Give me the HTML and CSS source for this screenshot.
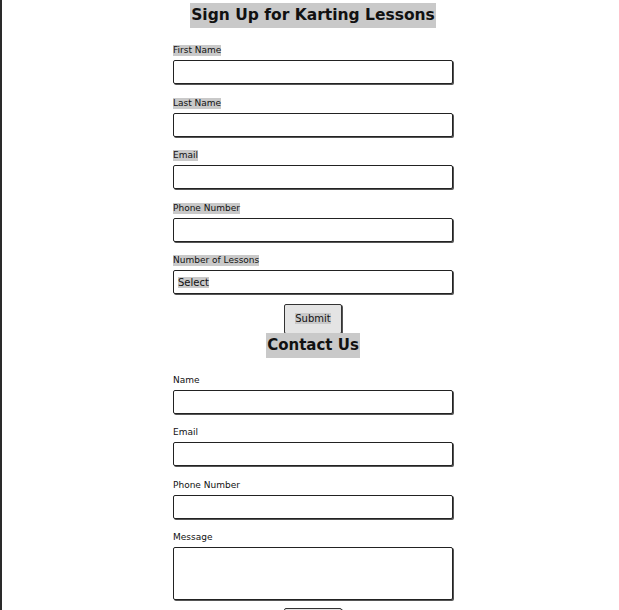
FILE: index.html
```html
<!DOCTYPE html>
<html>
<head>
<meta charset="utf-8">
<link rel="stylesheet" href="styles.css">
</head>
<body>
<div class="page">
  <section class="block">
    <h1 class="title">Sign Up for Karting Lessons</h1>
    <form class="form">
      <div class="field"><label class="lbl shaded">First Name</label><input class="box" type="text"></div>
      <div class="field"><label class="lbl shaded">Last Name</label><input class="box" type="text"></div>
      <div class="field"><label class="lbl shaded">Email</label><input class="box" type="text"></div>
      <div class="field"><label class="lbl shaded">Phone Number</label><input class="box" type="text"></div>
      <div class="field"><label class="lbl shaded">Number of Lessons</label><div class="box select"><span class="shaded">Select</span></div></div>
      <button type="button" class="btn"><span class="shaded">Submit</span></button>
    </form>
  </section>
  <section class="block">
    <h1 class="title title2">Contact Us</h1>
    <form class="form form2">
      <div class="field"><label class="lbl">Name</label><input class="box" type="text"></div>
      <div class="field"><label class="lbl">Email</label><input class="box" type="text"></div>
      <div class="field"><label class="lbl">Phone Number</label><input class="box" type="text"></div>
      <div class="field"><label class="lbl">Message</label><textarea class="box area"></textarea></div>
      <button type="button" class="btn btn-send" aria-label="Send"></button>
    </form>
  </section>
</div>
</body>
</html>
```
FILE: styles.css
```css
html, body {
  margin: 0;
  padding: 0;
  background: #fff;
  overflow: hidden;
}
body {
  border-left: 2px solid #2a2a2a;
  height: 610px;
  box-sizing: border-box;
  font-family: "DejaVu Sans", sans-serif;
  color: #111;
}
.page {
  padding-left: 5px;
  display: flex;
  flex-direction: column;
  align-items: center;
}
.block {
  display: flex;
  flex-direction: column;
  align-items: center;
}
.title {
  margin: 3px 0 0;
  font-size: 15.5px;
  line-height: 25px;
  height: 25px;
  font-weight: bold;
  background: #c9c9c9;
  padding: 0 1px;
}
.title2 {
  margin-top: -1px;
  font-size: 15px;
}
.form {
  width: 280px;
  display: flex;
  flex-direction: column;
  margin-top: 17px;
}
.form2 {
  margin-top: 17px;
}
.field {
  display: flex;
  flex-direction: column;
  align-items: flex-start;
  margin-bottom: 13.5px;
}
.shaded {
  background: #c9c9c9;
}
.lbl {
  font-size: 9px;
  line-height: 11px;
  height: 11px;
  margin-bottom: 4px;
}
.box {
  box-sizing: border-box;
  width: 280px;
  height: 24px;
  border: 1px solid #222;
  border-radius: 2px;
  box-shadow: 1px 1px 0 #555;
  background: #fff;
  margin: 0;
  padding: 0 4px;
  font: inherit;
}
.select {
  font-size: 10px;
  display: flex;
  align-items: center;
}
.area {
  height: 53px;
  resize: none;
}
.btn {
  align-self: center;
  margin-top: -4px;
  width: 58px;
  height: 30px;
  border: 1px solid #333;
  border-radius: 2px;
  box-shadow: 1px 1px 0 #555;
  background: #e4e4e4;
  font-family: inherit;
  font-size: 10px;
  color: #111;
  padding: 0;
}
.btn-send {
  margin-top: -6px;
}
```
